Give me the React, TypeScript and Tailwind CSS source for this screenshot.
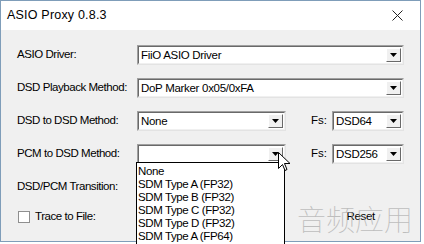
const items = [
  "None",
  "SDM Type A (FP32)",
  "SDM Type B (FP32)",
  "SDM Type C (FP32)",
  "SDM Type D (FP32)",
  "SDM Type A (FP64)",
];

function Combo({ w, text }: { w: string; text: string }) {
  return (
    <div className={`${w} relative h-[20px] bg-white border border-t-[#a0a0a0] border-l-[#a0a0a0] border-r-[#e3e3e3] border-b-[#e3e3e3]`}>
      <div className="absolute inset-0 border border-t-[#696969] border-l-[#696969] border-r-[#f0f0f0] border-b-[#f0f0f0]" />
      <div className="absolute left-[3px] top-[2px] text-[11.5px] leading-[14px] tracking-[-0.3px] text-black">{text}</div>
      <div className="absolute right-[2px] top-[2px] w-[15px] h-[14px] bg-[#f0f0f0] border border-t-white border-l-white border-r-[#696969] border-b-[#696969] flex items-center justify-center">
        <svg width="7" height="4" viewBox="0 0 7 4">
          <path d="M0 0 H7 L3.5 4 Z" fill="#000" />
        </svg>
      </div>
    </div>
  );
}

function Row({ label, children }: { label: string; children?: React.ReactNode }) {
  return (
    <div className="flex items-center h-[20px]">
      <div className="w-[136px] pl-[16px] text-[11.5px] tracking-[-0.45px] text-black">{label}</div>
      {children}
    </div>
  );
}

export default function App() {
  return (
    <div className="w-[424px] h-[244px] bg-white relative overflow-hidden" style={{ fontFamily: '"Liberation Sans", Arial, sans-serif' }}>
      <div className="w-[421px] h-[242px] border border-[#7f9db9] flex flex-col">
        {/* title bar */}
        <div className="h-[29px] bg-white flex items-center justify-between pl-[6px] pr-[17px]">
          <span className="text-[12.5px] tracking-[0.2px] text-black">ASIO Proxy 0.8.3</span>
          <svg width="11" height="11" viewBox="0 0 11 11">
            <path d="M0.5 0.5 L10.5 10.5 M10.5 0.5 L0.5 10.5" stroke="#222" strokeWidth="1" />
          </svg>
        </div>

        {/* body */}
        <div className="flex-1 bg-[#f0f0f0] pt-[15px] flex flex-col gap-[13px]">
          <Row label="ASIO Driver:">
            <Combo w="w-[267px]" text="FiiO ASIO Driver" />
          </Row>
          <Row label="DSD Playback Method:">
            <Combo w="w-[267px]" text="DoP Marker 0x05/0xFA" />
          </Row>
          <Row label="DSD to DSD Method:">
            <Combo w="w-[149px]" text="None" />
            <span className="ml-[25px] w-[21px] text-[11.5px]">Fs:</span>
            <Combo w="w-[72px]" text="DSD64" />
          </Row>
          <Row label="PCM to DSD Method:">
            <Combo w="w-[149px]" text="" />
            <span className="ml-[25px] w-[21px] text-[11.5px]">Fs:</span>
            <Combo w="w-[72px]" text="DSD256" />
          </Row>
          <Row label="DSD/PCM Transition:" />
          <div className="flex items-center h-[20px] pl-[17px] -mt-[3px]">
            <div className="w-[12px] h-[12px] bg-white border border-[#8f8f8f]" />
            <span className="ml-[5px] text-[11.5px] tracking-[-0.45px]">Trace to File:</span>
            <span className="ml-[251px] text-[11.5px] tracking-[-0.3px]">Reset</span>
          </div>
        </div>
      </div>

      {/* dropdown list */}
      <div className="absolute left-[136px] top-[162px] w-[149px] h-[90px] bg-white border border-black pl-[1px] pt-[2px]">
        {items.map((t) => (
          <div key={t} className="text-[11.5px] leading-[13px] tracking-[-0.4px] text-black">{t}</div>
        ))}
      </div>

      {/* watermark */}
      <div
        className="absolute left-[297px] top-[197px] text-[29px] text-[#a8a8a8] opacity-70 font-thin pointer-events-none"
        style={{ fontFamily: '"Noto Sans CJK SC", sans-serif' }}
      >
        音频应用
      </div>

      {/* cursor */}
      <svg className="absolute left-[278px] top-[152px]" width="13" height="21" viewBox="0 0 13 21">
        <path d="M0.5 0.5 V16.5 L4.5 12.5 L7 18.5 L9 17.5 L6.5 11.5 H12 Z" fill="#fff" stroke="#000" strokeWidth="1" />
      </svg>
    </div>
  );
}
